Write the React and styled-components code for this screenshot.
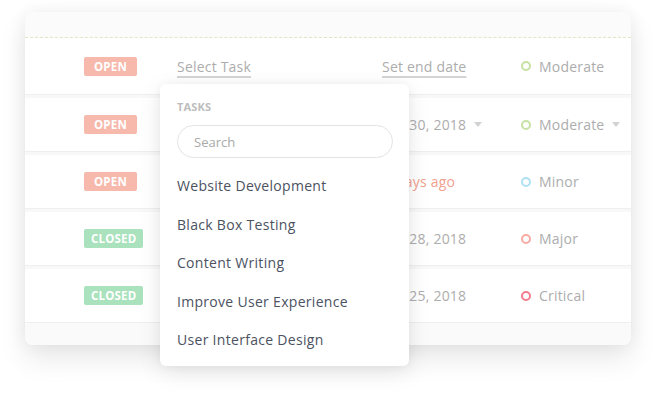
import React from "react";
import styled, { createGlobalStyle } from "styled-components";

const GlobalStyle = createGlobalStyle`
  body {
    margin: 0;
    background: #ffffff;
    font-family: "Open Sans", "Liberation Sans", sans-serif;
  }
`;

const Stage = styled.div`
  width: 657px;
  height: 398px;
  padding: 12px 0 0 25px;
  box-sizing: border-box;
  overflow: hidden;
`;

const Card = styled.div`
  position: relative;
  width: 606px;
  border-radius: 8px;
  background: #ffffff;
  box-shadow: 0 14px 28px rgba(0, 0, 0, 0.09), 0 0 18px rgba(0, 0, 0, 0.06);
`;

const Header = styled.div`
  height: 25px;
  background: #fbfbfb;
  border-radius: 8px 8px 0 0;
  border-bottom: 1px dashed #dde8c6;
`;

const Row = styled.div`
  height: 57px;
  display: grid;
  grid-template-columns: 93px 207px 137px 1fr;
  align-items: center;
  padding-left: 59px;
  box-sizing: border-box;
  border-bottom: 1px solid #efefef;
  & + & {
    box-shadow: inset 0 3px 0 #f8f8f8;
    padding-top: 3px;
  }
  &:first-of-type {
    height: 58px;
    padding-top: 2px;
  }
`;

const Badge = styled.span`
  justify-self: start;
  height: 19px;
  line-height: 19px;
  padding: 0 ${(p) => (p.closed ? "7px" : "10px")};
  border-radius: 2px;
  background: ${(p) => (p.closed ? "#a9e2bd" : "#f6b9ac")};
  color: #ffffff;
  font-size: 11.5px;
  font-weight: 700;
  letter-spacing: 0.2px;
`;

const LinkText = styled.span`
  justify-self: start;
  margin-left: ${(p) => p.offset || 0}px;
  color: #adadad;
  font-size: 14px;
  letter-spacing: 0.2px;
  text-decoration: underline;
  text-decoration-color: #d4d4d4;
  text-underline-offset: 4px;
  text-decoration-thickness: 2px;
`;

const DateText = styled.span`
  display: flex;
  align-items: center;
  gap: 8px;
  color: ${(p) => (p.late ? "#f2a08f" : "#adadad")};
  font-size: 14px;
  letter-spacing: 0.2px;
  white-space: nowrap;
`;

const Caret = styled.span`
  width: 0;
  height: 0;
  border-left: 4px solid transparent;
  border-right: 4px solid transparent;
  border-top: 5px solid #d2d2d2;
`;

const Priority = styled.span`
  display: flex;
  align-items: center;
  gap: 8px;
  color: #adadad;
  font-size: 14px;
  letter-spacing: 0.2px;
`;

const Dot = styled.span`
  width: 6px;
  height: 6px;
  border-radius: 50%;
  border: 2px solid ${(p) => p.color};
`;

const Footer = styled.div`
  height: 22px;
  background: #fafafa;
  border-radius: 0 0 8px 8px;
`;

const Menu = styled.div`
  position: absolute;
  left: 135px;
  top: 72px;
  width: 249px;
  height: 282px;
  box-sizing: border-box;
  padding: 16px 17px 0;
  background: #ffffff;
  border-radius: 6px;
  box-shadow: 0 6px 22px rgba(0, 0, 0, 0.1), 0 0 8px rgba(0, 0, 0, 0.04);
`;

const MenuLabel = styled.div`
  height: 14px;
  line-height: 14px;
  color: #bdbdbd;
  font-size: 11px;
  font-weight: 700;
  letter-spacing: 0.2px;
`;

const Search = styled.input`
  display: block;
  width: 216px;
  height: 33px;
  margin-top: 11px;
  box-sizing: border-box;
  padding: 0 16px;
  border: 1px solid #e3e3e3;
  border-radius: 17px;
  font-family: inherit;
  font-size: 13px;
  color: #555;
  outline: none;
  &::placeholder {
    color: #a9a9a9;
  }
`;

const List = styled.ul`
  list-style: none;
  margin: 9px 0 0;
  padding: 0;
`;

const Item = styled.li`
  height: 38.5px;
  line-height: 38.5px;
  color: #4b5261;
  font-size: 14px;
  letter-spacing: 0.3px;
`;

const rows = [
  { status: "OPEN", date: null, priority: "Moderate", color: "#c6e1a2" },
  { status: "OPEN", date: "Jun 30, 2018", caret: true, priority: "Moderate", color: "#c6e1a2", pcaret: true },
  { status: "OPEN", date: "2 days ago", late: true, priority: "Minor", color: "#aee1f6" },
  { status: "CLOSED", date: "Jun 28, 2018", priority: "Major", color: "#f7aaa2" },
  { status: "CLOSED", date: "Jun 25, 2018", priority: "Critical", color: "#f27c8c" },
];

const tasks = [
  "Website Development",
  "Black Box Testing",
  "Content Writing",
  "Improve User Experience",
  "User Interface Design",
];

export default function App() {
  return (
    <Stage>
      <GlobalStyle />
      <Card>
        <Header />
        {rows.map((r, i) => (
          <Row key={i}>
            <Badge closed={r.status === "CLOSED"}>{r.status}</Badge>
            {i === 0 ? <LinkText>Select Task</LinkText> : <span />}
            {r.date ? (
              <DateText late={r.late}>
                {r.date}
                {r.caret && <Caret />}
              </DateText>
            ) : (
              <LinkText offset={-2}>Set end date</LinkText>
            )}
            <Priority>
              <Dot color={r.color} />
              {r.priority}
              {r.pcaret && <Caret />}
            </Priority>
          </Row>
        ))}
        <Footer />
        <Menu>
          <MenuLabel>TASKS</MenuLabel>
          <Search placeholder="Search" />
          <List>
            {tasks.map((t) => (
              <Item key={t}>{t}</Item>
            ))}
          </List>
        </Menu>
      </Card>
    </Stage>
  );
}
